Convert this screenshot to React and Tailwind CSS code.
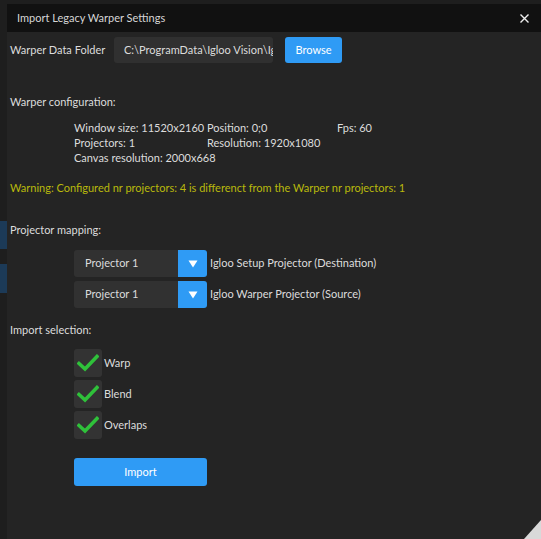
import React from "react";

const font = { fontFamily: "Lato, 'Open Sans', sans-serif" };

function Check() {
  return (
    <svg width="22" height="18" viewBox="0 0 22 18">
      <path d="M2 9.5 L8 15 L20 2.5" fill="none" stroke="#2fc13a" strokeWidth="3.6" strokeLinecap="square" />
    </svg>
  );
}

function Dropdown({ label }) {
  return (
    <div className="flex items-center h-[27px]">
      <div className="flex h-full w-[133px] rounded-[3px] overflow-hidden">
        <div className="flex-1 bg-[#313131] flex items-center pl-[11px] text-[11px] text-[#dcdcdc]">Projector 1</div>
        <div className="w-[29px] bg-[#2f9bf5] flex items-center justify-center">
          <svg width="10" height="8" viewBox="0 0 10 8"><path d="M0.5 0.5 H9.5 L5 7.5 Z" fill="#ffffff" /></svg>
        </div>
      </div>
      <span className="ml-[3px] text-[11px] text-[#dcdcdc]">{label}</span>
    </div>
  );
}

function CheckRow({ label }) {
  return (
    <div className="flex items-center h-[28px]">
      <div className="w-[28px] h-[28px] bg-[#333333] rounded-[3px] flex items-center justify-center">
        <Check />
      </div>
      <span className="ml-[2px] text-[11px] text-[#dcdcdc]">{label}</span>
    </div>
  );
}

export default function App() {
  return (
    <div className="relative w-[541px] h-[539px] bg-[#1e1e1e] overflow-hidden flex" style={font}>
      <div className="w-[7px] flex flex-col shrink-0">
        <div className="h-[221px]" />
        <div className="h-[28px] bg-[#1c3a57]" />
        <div className="h-[15px]" />
        <div className="h-[29px] bg-[#1c3a57]" />
      </div>
      <div className="flex-1 mt-[4px] bg-[#242424] flex flex-col">
        <div className="h-[28px] bg-[#111111] flex items-center justify-between pl-[10px] pr-[12px]">
          <span className="text-[11px] text-[#d6d6d6]">Import Legacy Warper Settings</span>
          <svg width="9" height="9" viewBox="0 0 9 9"><path d="M0.5 0.5 L8.5 8.5 M8.5 0.5 L0.5 8.5" stroke="#eeeeee" strokeWidth="1.4" /></svg>
        </div>
        <div className="pl-[3px] flex flex-col text-[11px] text-[#dcdcdc]">
          <div className="mt-[5px] flex items-center h-[26px]">
            <span className="w-[104px]">Warper Data Folder</span>
            <div className="w-[159px] h-full bg-[#303030] rounded-[3px] flex items-center pl-[10px] overflow-hidden whitespace-nowrap">C:\ProgramData\Igloo Vision\Igloo</div>
            <div className="ml-[12px] w-[57px] h-full bg-[#2f9bf5] rounded-[3px] flex items-center justify-center text-white">Browse</div>
          </div>
          <div className="mt-[31px] leading-[15px]">Warper configuration:</div>
          <div className="mt-[11px] ml-[64px] grid grid-cols-[133px_130px_auto] leading-[15px]">
            <span>Window size: 11520x2160</span>
            <span>Position: 0;0</span>
            <span>Fps: 60</span>
            <span>Projectors: 1</span>
            <span>Resolution: 1920x1080</span>
            <span></span>
            <span className="col-span-3">Canvas resolution: 2000x668</span>
          </div>
          <div className="mt-[15px] leading-[15px] text-[#b9b90c]">Warning: Configured nr projectors: 4 is differenct from the Warper nr projectors: 1</div>
          <div className="mt-[27px] leading-[15px]">Projector mapping:</div>
          <div className="mt-[13px] ml-[64px] flex flex-col gap-[4px]">
            <Dropdown label="Igloo Setup Projector (Destination)" />
            <Dropdown label="Igloo Warper Projector (Source)" />
          </div>
          <div className="mt-[14px] leading-[15px]">Import selection:</div>
          <div className="mt-[12px] ml-[64px] flex flex-col gap-[3px]">
            <CheckRow label="Warp" />
            <CheckRow label="Blend" />
            <CheckRow label="Overlaps" />
          </div>
          <div className="mt-[19px] ml-[64px] w-[133px] h-[28px] bg-[#2f9bf5] rounded-[3px] flex items-center justify-center text-white">Import</div>
        </div>
      </div>
      <svg className="absolute right-0 bottom-0" width="17" height="19" viewBox="0 0 17 19">
        <path d="M0 19 L17 19 L17 0 Z" fill="#d9d9d9" />
      </svg>
    </div>
  );
}
